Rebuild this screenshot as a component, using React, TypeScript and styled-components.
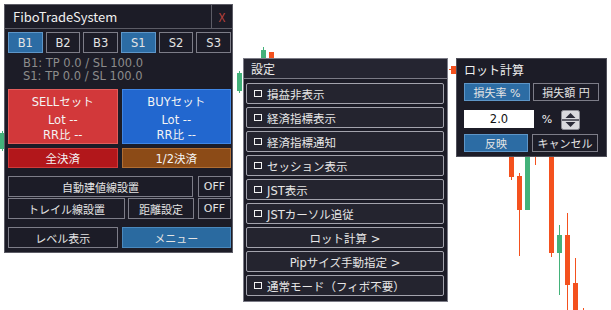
import React from "react";
import styled, { createGlobalStyle, css } from "styled-components";

const GlobalStyle = createGlobalStyle`
  html, body { margin: 0; padding: 0; background: #fff; }
  body { font-family: "DejaVu Sans", "Noto Sans CJK JP", sans-serif; }
  * { box-sizing: border-box; }
`;

const Canvas = styled.div`
  position: relative;
  width: 611px; height: 310px;
  overflow: hidden;
  background: #fff;
`;

const Chart = styled.svg`
  position: absolute; left: 0; top: 0;
`;

const Window = styled.div<{ $x: number; $y: number; $w: number; $h: number; $border?: string }>`
  position: absolute;
  left: ${({ $x }) => $x}px; top: ${({ $y }) => $y}px;
  width: ${({ $w }) => $w}px; height: ${({ $h }) => $h}px;
  background: #1c1c27;
  border: 1px solid ${({ $border }) => $border || "#5c5c66"};
  color: #e6e6e6;
  display: flex; flex-direction: column;
`;

/* ---------- main panel ---------- */

const TitleBar = styled.div`
  display: flex; align-items: stretch;
  height: 24px;
  border-bottom: 1px solid #5c5c66;
`;

const Title = styled.div`
  flex: 1;
  display: flex; align-items: center;
  padding-left: 8px;
  font-family: "Noto Sans CJK JP", sans-serif;
  font-size: 13px; color: #f0f0f0;
`;

const CloseBox = styled.div`
  width: 21px;
  border-left: 1px solid #5c5c66;
  display: flex; align-items: center; justify-content: center;
  font-family: "Noto Sans CJK JP", sans-serif;
  font-size: 12px; color: #b8413c;
`;

const Body = styled.div`
  display: flex; flex-direction: column;
  padding: 3px 1px 4px 3px;
`;

const TabRow = styled.div`
  display: grid; grid-template-columns: repeat(6, 1fr); gap: 3px;
  height: 21px;
`;

const Btn = styled.div<{ $active?: boolean }>`
  display: flex; align-items: center; justify-content: center;
  border: 1px solid #7d7d88;
  background: transparent;
  color: #e4e4e4;
  font-size: 11px;
  white-space: nowrap;
  ${({ $active }) => $active && css`
    background: #2c6ca4;
    border-color: #5e96c8;
  `}
`;

const Tab = styled(Btn)`
  font-size: 11.5px;
`;

const Info = styled.div`
  margin: 4px 0 6px 15px;
  font-size: 11.5px; line-height: 13px;
  color: #8c8c8c;
`;

const Pair = styled.div<{ $h: number; $mt?: number }>`
  display: grid; grid-template-columns: 1fr 1fr; gap: 4px;
  height: ${({ $h }) => $h}px;
  margin-top: ${({ $mt }) => $mt || 0}px;
`;

const tones = {
  sell: { bg: "#d2383a", bd: "#e35d5c" },
  buy: { bg: "#2267cf", bd: "#4086e4" },
  all: { bg: "#b2171b", bd: "#cf3b3b" },
  half: { bg: "#8c4b17", bd: "#b06e34" },
};

const Trade = styled.div<{ $tone: keyof typeof tones }>`
  display: flex; flex-direction: column; align-items: center;
  background: ${({ $tone }) => tones[$tone].bg};
  border: 1px solid ${({ $tone }) => tones[$tone].bd};
  color: #f4f4f4;
  font-size: 11.5px;
  padding-top: 4px;
`;

const TradeHead = styled.div`
  line-height: 16px;
  margin-bottom: 3px;
`;

const TradeLine = styled.div`
  line-height: 15px;
`;

const Settle = styled.div<{ $tone: keyof typeof tones }>`
  display: flex; align-items: center; justify-content: center;
  background: ${({ $tone }) => tones[$tone].bg};
  border: 1px solid ${({ $tone }) => tones[$tone].bd};
  color: #f4f4f4;
  font-size: 11.5px;
`;

const OptionRow = styled.div<{ $cols: string; $mt: number; $gap?: number }>`
  display: grid; grid-template-columns: ${({ $cols }) => $cols};
  column-gap: ${({ $gap }) => $gap ?? 3}px;
  height: 21px;
  margin-top: ${({ $mt }) => $mt}px;
`;

const MenuBtn = styled(Btn)`
  background: #2a6aa0;
  border-color: #4b89bd;
`;

/* ---------- settings menu ---------- */

const MenuHead = styled.div`
  height: 20px;
  border-bottom: 1px solid #7b7b86;
  display: flex; align-items: center;
  padding-left: 7px;
  font-size: 12px; color: #ececec;
  background: #252531;
`;

const MenuList = styled.div`
  display: flex; flex-direction: column; gap: 3px;
  padding: 4px 3px 0 2px;
`;

const MenuItem = styled.div<{ $center?: boolean }>`
  height: 21px;
  display: flex; align-items: center;
  justify-content: ${({ $center }) => ($center ? "center" : "flex-start")};
  padding-left: ${({ $center }) => ($center ? 0 : 7)}px;
  border: 1px solid #a3a3ad;
  border-radius: 2px;
  background: #24242f;
  color: #e6e6e6;
  font-size: 11.5px;
  white-space: nowrap;
`;

const Check = styled.span`
  width: 8px; height: 7px;
  border: 1.4px solid #f2f2f2;
  margin-right: 5px;
  flex: none;
`;

/* ---------- lot calc ---------- */

const LotBody = styled.div`
  display: flex; flex-direction: column;
  padding: 3px 0 0 7px;
`;

const LotTitle = styled.div`
  line-height: 18px;
  font-size: 12px; color: #f0f0f0;
  margin-bottom: 3px;
`;

const LotRow = styled.div`
  display: flex; gap: 3px;
  height: 18px;
`;

const LotBtn = styled(Btn)<{ $w: number }>`
  width: ${({ $w }) => $w}px;
  font-size: 11px;
`;

const InputRow = styled.div`
  display: flex; align-items: flex-start;
  height: 20px;
  margin-top: 9px;
  margin-bottom: 4px;
`;

const NumInput = styled.div`
  width: 70px; height: 18px;
  background: #fff;
  color: #111;
  font-size: 11.5px;
  display: flex; align-items: center; justify-content: center;
`;

const Unit = styled.div`
  width: 26px; height: 18px;
  display: flex; align-items: center; justify-content: center;
  font-size: 11px; color: #f0f0f0;
`;

const candles: [number, number, number, number, number, string][] = [
  // x, bodyTop, bodyBottom, wickTop, wickBottom, color
  [0, 133, 149, 131, 151, "g"],
  [237, 73, 91, 71, 93, "g"],
  [261, 50, 62, 47, 62, "g"],
  [269, 52, 62, 52, 62, "o"],
  [509, 150, 177, 150, 180, "o"],
  [517, 176, 210, 173, 256, "o"],
  [525, 150, 210, 150, 210, "g"],
  [549, 150, 253, 150, 257, "o"],
  [557, 235, 253, 225, 295, "g"],
  [565, 235, 285, 213, 310, "o"],
  [573, 283, 310, 258, 310, "o"],
];

const ORANGE = "#f4511e";
const GREEN = "#43b27a";

function Candles() {
  return (
    <Chart width={611} height={310}>
      {candles.map(([x, bt, bb, wt, wb, c], i) => {
        const fill = c === "g" ? GREEN : ORANGE;
        return (
          <g key={i}>
            <rect x={x + 2} y={wt} width={1} height={wb - wt} fill={fill} />
            <rect x={x} y={bt} width={5} height={bb - bt} fill={fill} />
          </g>
        );
      })}
      <rect x={535} y={150} width={1} height={15} fill={ORANGE} />
      <rect x={583} y={308} width={1} height={2} fill={ORANGE} />
      <line x1={445} y1={69.5} x2={451} y2={69.5} stroke={ORANGE} strokeDasharray="2 2" />
      <rect x={451} y={66} width={5} height={8} fill={ORANGE} />
    </Chart>
  );
}

function Spinner() {
  return (
    <svg width={19} height={20} viewBox="0 0 19 20" style={{ marginLeft: 1 }}>
      <rect x={0.5} y={0.5} width={18} height={19} rx={2} fill="#d9d9de" stroke="#8d8d96" />
      <line x1={1} y1={10} x2={18} y2={10} stroke="#2a2a38" strokeWidth={1.4} />
      <polygon points="9.5,3 14.5,8 4.5,8" fill="#2a2a38" />
      <polygon points="9.5,17 14.5,12 4.5,12" fill="#2a2a38" />
    </svg>
  );
}

const menuItems: { label: string; check?: boolean }[] = [
  { label: "損益非表示", check: true },
  { label: "経済指標表示", check: true },
  { label: "経済指標通知", check: true },
  { label: "セッション表示", check: true },
  { label: "JST表示", check: true },
  { label: "JSTカーソル追従", check: true },
  { label: "ロット計算 >" },
  { label: "Pipサイズ手動指定 >" },
  { label: "通常モード（フィボ不要）", check: true },
];

export default function App() {
  return (
    <>
      <GlobalStyle />
      <Canvas>
        <Candles />

        <Window $x={4} $y={4} $w={229} $h={249}>
          <TitleBar>
            <Title>FiboTradeSystem</Title>
            <CloseBox>X</CloseBox>
          </TitleBar>
          <Body>
            <TabRow>
              {["B1", "B2", "B3", "S1", "S2", "S3"].map((t) => (
                <Tab key={t} $active={t === "B1" || t === "S1"}>{t}</Tab>
              ))}
            </TabRow>
            <Info>
              <div>B1: TP 0.0 / SL 100.0</div>
              <div>S1: TP 0.0 / SL 100.0</div>
            </Info>
            <Pair $h={55}>
              <Trade $tone="sell">
                <TradeHead>SELLセット</TradeHead>
                <TradeLine>Lot --</TradeLine>
                <TradeLine>RR比 --</TradeLine>
              </Trade>
              <Trade $tone="buy">
                <TradeHead>BUYセット</TradeHead>
                <TradeLine>Lot --</TradeLine>
                <TradeLine>RR比 --</TradeLine>
              </Trade>
            </Pair>
            <Pair $h={20} $mt={4}>
              <Settle $tone="all">全決済</Settle>
              <Settle $tone="half">1/2決済</Settle>
            </Pair>
            <OptionRow $cols="1fr 33px" $mt={8} $gap={5}>
              <Btn>自動建値線設置</Btn>
              <Btn>OFF</Btn>
            </OptionRow>
            <OptionRow $cols="117px 66px 1fr" $mt={1}>
              <Btn>トレイル線設置</Btn>
              <Btn>距離設定</Btn>
              <Btn style={{ marginLeft: 1 }}>OFF</Btn>
            </OptionRow>
            <OptionRow $cols="1fr 1fr" $mt={8} $gap={4}>
              <Btn>レベル表示</Btn>
              <MenuBtn>メニュー</MenuBtn>
            </OptionRow>
          </Body>
        </Window>

        <Window $x={243} $y={58} $w={205} $h={244} $border="#7b7b86">
          <MenuHead>設定</MenuHead>
          <MenuList>
            {menuItems.map((m) => (
              <MenuItem key={m.label} $center={!m.check}>
                {m.check && <Check />}
                {m.label}
              </MenuItem>
            ))}
          </MenuList>
        </Window>

        <Window $x={456} $y={58} $w={151} $h={99} $border="#50505a">
          <LotBody>
            <LotTitle>ロット計算</LotTitle>
            <LotRow>
              <LotBtn $w={66} $active>損失率 %</LotBtn>
              <LotBtn $w={66}>損失額 円</LotBtn>
            </LotRow>
            <InputRow>
              <NumInput>2.0</NumInput>
              <Unit>%</Unit>
              <Spinner />
            </InputRow>
            <LotRow>
              <LotBtn $w={64} $active>反映</LotBtn>
              <LotBtn $w={66} style={{ marginLeft: 1 }}>キャンセル</LotBtn>
            </LotRow>
          </LotBody>
        </Window>
      </Canvas>
    </>
  );
}
